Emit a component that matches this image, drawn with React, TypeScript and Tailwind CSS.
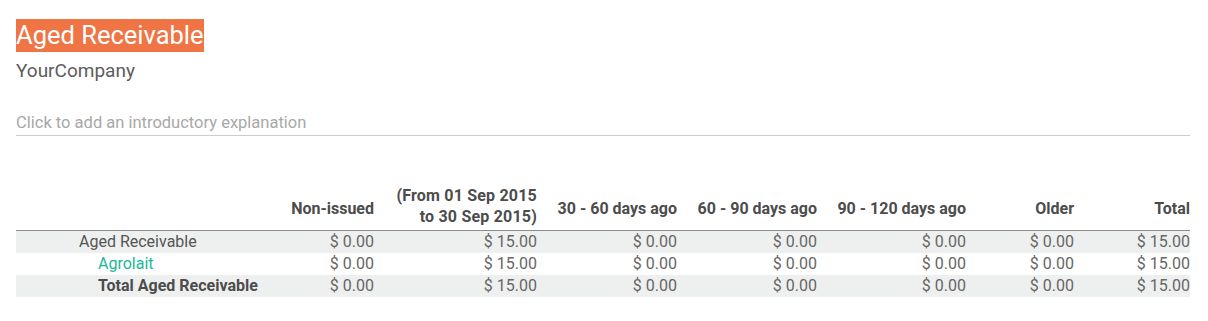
const cols = 'grid grid-cols-[266px_92px_163px_140px_140px_149px_108px_116px]';

const headers = [
  'Non-issued',
  '(From 01 Sep 2015 to 30 Sep 2015)',
  '30 - 60 days ago',
  '60 - 90 days ago',
  '90 - 120 days ago',
  'Older',
  'Total',
];

const rows = [
  { label: 'Aged Receivable', kind: 'group', values: ['$ 0.00', '$ 15.00', '$ 0.00', '$ 0.00', '$ 0.00', '$ 0.00', '$ 15.00'] },
  { label: 'Agrolait', kind: 'line', values: ['$ 0.00', '$ 15.00', '$ 0.00', '$ 0.00', '$ 0.00', '$ 0.00', '$ 15.00'] },
  { label: 'Total Aged Receivable', kind: 'total', values: ['$ 0.00', '$ 15.00', '$ 0.00', '$ 0.00', '$ 0.00', '$ 0.00', '$ 15.00'] },
];

export default function App() {
  return (
    <div className="min-h-[321px] bg-white pl-4 pr-[18px] pt-[19px] font-['Roboto',sans-serif] text-[#666666]">
      {/* Title */}
      <div>
        <span className="inline-block h-[33px] bg-[#ef7545] text-[25.5px] leading-[33px] text-white">
          Aged Receivable
        </span>
      </div>
      <div className="mt-[7px] text-[19px] leading-6 text-[#5c5c5c]">YourCompany</div>

      {/* Intro */}
      <div className="mt-[28px] border-b border-[#cccccc] text-[16.5px] leading-6 text-[#a8a8a8]">
        Click to add an introductory explanation
      </div>

      {/* Table */}
      <div className="mt-[49px] text-[16px]">
        <div className={`${cols} items-end border-b border-[#8c8c8c] font-bold leading-[21px] text-[#4c4c4c]`}>
          <div />
          {headers.map((h, i) =>
            i === 1 ? (
              <div key={h} className="pb-[3px] text-right tracking-[0.2px]">
                (From 01 Sep 2015
                <br />
                to 30 Sep 2015)
              </div>
            ) : (
              <div key={h} className="pb-[11px] text-right">
                {h}
              </div>
            )
          )}
        </div>
        {rows.map((r) => (
          <div
            key={r.label}
            className={`${cols} leading-[22px] ${r.kind === 'line' ? 'bg-white' : 'bg-[#eef0ef]'}`}
          >
            <div
              className={
                r.kind === 'group'
                  ? 'pl-[63px] text-[#555555]'
                  : r.kind === 'line'
                  ? 'pl-[82px] text-[#21b799]'
                  : 'pl-[82px] font-bold text-[#4c4c4c]'
              }
            >
              {r.label}
            </div>
            {r.values.map((v, i) => (
              <div key={i} className="text-right">
                {v}
              </div>
            ))}
          </div>
        ))}
      </div>
    </div>
  );
}
